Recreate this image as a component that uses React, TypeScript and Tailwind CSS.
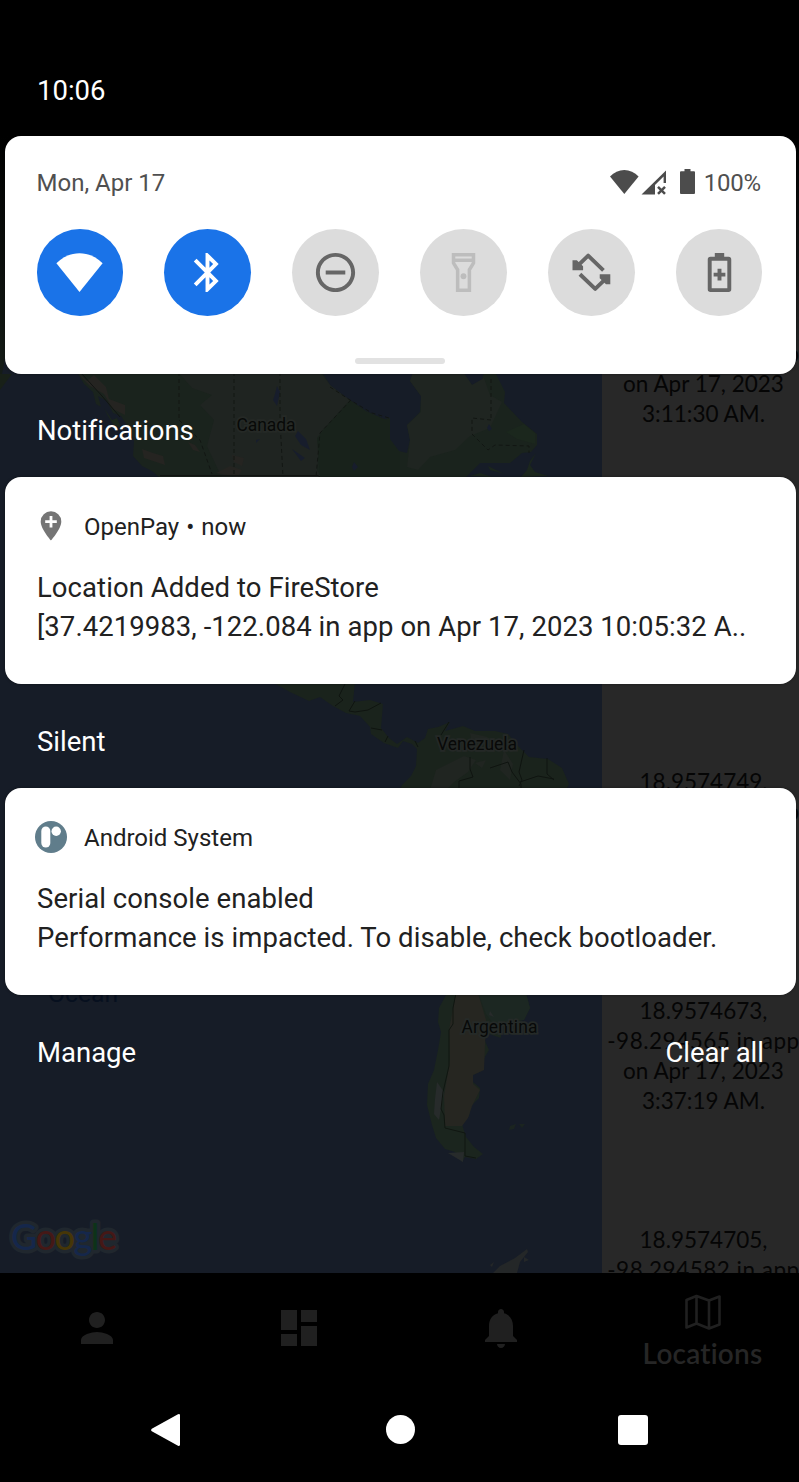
import type { ReactNode } from "react";

const wifiFan = "M12 21.9 0.2 7.3C3.5 4 7.6 2.2 12 2.2S20.5 4 23.8 7.3Z";

function TileIcon({ children }: { children: ReactNode }) {
  return (
    <svg viewBox="0 0 24 24" className="size-[47px]" fill="currentColor">
      {children}
    </svg>
  );
}

const tiles: { name: string; tone: string; icon: ReactNode }[] = [
  { name: "wifi", tone: "bg-[#1a73e8] text-white", icon: <path d={wifiFan} /> },
  {
    name: "bluetooth",
    tone: "bg-[#1a73e8] text-white",
    icon: (
      <path d="M17.71 7.71L12 2h-1v7.59L6.41 5 5 6.41 10.59 12 5 17.59 6.41 19 11 14.41V22h1l5.71-5.71-4.3-4.29 4.3-4.29zM13 5.83l1.88 1.88L13 9.59V5.83zm1.88 10.46L13 18.17v-3.76l1.88 1.88z" />
    ),
  },
  {
    name: "dnd",
    tone: "bg-[#dcdcdc] text-[#666]",
    icon: (
      <path d="M7 11h10v2H7zM12 2C6.48 2 2 6.48 2 12s4.48 10 10 10 10-4.48 10-10S17.52 2 12 2zm0 18c-4.41 0-8-3.59-8-8s3.59-8 8-8 8 3.59 8 8-3.59 8-8 8z" />
    ),
  },
  {
    name: "flashlight",
    tone: "bg-[#dcdcdc] text-[#bdbdbd]",
    icon: (
      <>
        <path
          d="M6.9 2.9h10.2v4.3L15 10.6v10.5H9V10.6L6.9 7.2zM6.9 5.8h10.2"
          fill="none"
          stroke="currentColor"
          strokeWidth="1.8"
        />
        <circle cx="12" cy="13.9" r="1.5" />
      </>
    ),
  },
  {
    name: "rotate",
    tone: "bg-[#dcdcdc] text-[#666]",
    icon: (
      <>
        <path
          d="M4.5 9 10.3 3.4 18.1 10.9M6.100 12.900 13.900 20.400 19.600 14.900"
          fill="none"
          stroke="currentColor"
          strokeWidth="2"
          strokeLinejoin="round"
        />
        <path d="M2.300 5.700h2.200l3.200 3.100v2H2.300zM21.600 18h-2.200l-3.200-3.100v-2h5.400z" />
      </>
    ),
  },
  {
    name: "battery",
    tone: "bg-[#dcdcdc] text-[#666]",
    icon: (
      <>
        <rect x="7" y="5" width="10" height="16" rx=".4" fill="none" stroke="currentColor" strokeWidth="2" />
        <path d="M9.6 2h4.8v2.5H9.6zM11 10.1h2v2h2v2h-2v2h-2v-2H9v-2h2z" />
      </>
    ),
  },
];

function MapBackdrop() {
  return (
    <svg viewBox="0 0 602 1273" className="h-[1273px] w-[602px] shrink-0 bg-[#161c27]">
      <path d="M0 136H6V352L2 374H0Z" fill="#151c17" />
      <path d="M0 374V390L12 374Z" fill="#182018" />
      {/* North America */}
      <g>
        <path
          d="M77 372 84 384 93 392 96 404 101 407 98 396 107 401 113 413 121 416 128 427 134 441 133 456 142 466 152 471 160 478H465L480 463H510L522 453 531 452 537 445V434L522 422 504 403 505 392 495 372H484L482 380 472 385 463 372H413L410 381 421 396 420 412 407 425 410 440 407 453 399 451 390 439V418L384 419 365 411 345 397 330 385 322 372Z"
          fill="#1a231d"
        />
        <path d="M178 372H320L331 386 350 400 320 433 317 470 322 478H222L207 446 214 420 200 405 212 395 192 388Z" fill="#1f2421" />
        <path d="M413 372H463L472 385 484 378 490 395 502 402 490 428 470 436 455 450 430 457 418 470 407 467 410 440 407 425 421 412V396L410 381Z" fill="#1f2521" />
        <path d="M350 400 366 411 384 419 390 420V440L400 453V478H320L317 438Z" fill="#18221b" />
        <path d="m78 372 9 9 7-6 12 12 3 12 16 6v10l-12-6-9-15-14-8-8-8zM142 449l11 4 10 3 2 9-9-3-12-4zM188 442l7 3 5 7-7-2zM232 455l12 3-2 8-8-4zM216 473l14-7 12 4-4 7z" fill="#252421" />
        <path d="m298 431 8 8 4 11-9-5-6-9zM277 386l3 6-3 14-4-6 2-6zM292 449l13 9-4 3zM354 462l4 5-4 4-2-4zM256 440l4-1-4 4zM489 424l3 5-3 2-2-3z" fill="#171d2c" />
        <path d="m536 453-6 12 5 7 13 4-27 1 6-7 3-9zM488 466l12 6 5 2-15-4zM470 476l10-3 12 4zM104 408l8 12 5-2 4 10-8-4-5-8z" fill="#1b261d" />
        <path d="M506 432l18-8 11 9v11l-18-5z" fill="#1b271d" />
        <path
          d="M179 372V420M179 420 200 440 212 474M234 372V477M280 372V420L283 477M351 400 320 433 316 477M330 387 350 400 372 413 389 418M491 379V420M491 420 472 418 472 434 488 450 495 445 529 446V453"
          fill="none"
          stroke="#121613"
          strokeDasharray="4 3"
        />
        <path d="M160 475.500H318L321 478M82 374l20 22 18 21" fill="none" stroke="#121513" strokeWidth="1" />
        <text x="266" y="430.500" textAnchor="middle" textLength="59" className="font-['Roboto'] text-[17.5px]" fill="#080908" stroke="#252926" strokeWidth="3.500" paintOrder="stroke">Canada</text>
      </g>
      {/* Central America and northern South America */}
      <path d="M272 682 290 692 309 701 320 697 333 706 346 713 360 716 370 727 371 734 384 743 398 748 403 741 412 744 417 749 416 766 411 776 402 785 400 790H566L569 784 562 768 548 759 529 757 518 746 508 734 495 731 475 731 463 726 445 731 450 722 438 727 428 729 425 738 418 743 407 737 397 744 389 738 381 728 383 704 370 700 353 702 355 682Z" fill="#1a231c" />
      <path d="m436 770 28-14 12 4-8 12-14 10-8 8h-16zM504 750l9 14-3 16-10-10zM470 733l18 4-4 5-13-3zM475 763l11-3-4 8z" fill="#202521" />
      <path
        d="m345 684-6 12 4 4-8 6M355 701l-6 10 6 1 13-2 13-7M371 728l11 2M385 742l3-6M449 722l-8 13M415 741l3 6M470 757v12l3 8-14 4v8M490 768l18-6 4 10 9 12v6M524 750l-5 22 3 8-3 6M547 758v16l7 6M520 782l18-6 16 3"
        fill="none"
        stroke="#0f1410"
      />
      <text x="477" y="750" textAnchor="middle" textLength="80" className="font-['Roboto'] text-[17.500px]" fill="#080908" stroke="#242826" strokeWidth="3.500" paintOrder="stroke">Venezuela</text>
      {/* Southern South America */}
      <path d="M447 993 439 1008 438 1022 441 1032 438 1050 434 1070 428 1084 427 1105 432 1125 436 1138 445 1149 455 1152 462 1162 465 1157 476 1159 483 1154 474 1147 466 1137 462 1124 469 1116 471 1106 479 1098 480 1088 473 1082 473 1075 483 1070V1060L489 1050 485 1041 486 1033 501 1038 501 1026 524 1020 530 1008 526 993Z" fill="#1b251e" />
      <path d="M456 993H478L486 1020 484 1070 473 1075 473 1084 480 1090 472 1106 468 1118 462 1126 445 1126 444 1096 450 1060 449 1030Z" fill="#262621" />
      <path d="m478 993 8 21 6 8 32-2 6-12-4-15z" fill="#1c2722" />
      <path d="m437 1082 7 10-5 28-5-6 1-15zM448 1153l16-1-1 10zM490 1011l4 6-5-2z" fill="#272b2b" />
      <path d="M456 993 453 1008 453 1024 449 1030V1066L443 1092 441 1109 444 1115 445 1128 465 1133V1156L476 1158" fill="none" stroke="#101611" />
      <path d="m510 1126 6-2-2 5-5 1zM519 1124l6 0-3 4z" fill="#1b2420" />
      <path d="M493 1273 500 1266 515 1258 527 1249 528 1252 520 1262 517 1273ZM524 1257l5 3-5 2zM490 1265l4-3-2 5z" fill="#242728" />
      <text x="499.500" y="1033" textAnchor="middle" textLength="76" className="font-['Roboto'] text-[17.500px]" fill="#080908" stroke="#252a28" strokeWidth="3.500" paintOrder="stroke">Argentina</text>
      <text x="83" y="1002" textAnchor="middle" textLength="70" lengthAdjust="spacingAndGlyphs" className="font-['Roboto'] text-[24px]" fill="#07101f">Ocean</text>
      <text x="11" y="1250" textLength="106" className="font-['Lato'] text-[36px] font-medium" stroke="#20272e" strokeWidth="7" strokeLinejoin="round">Google</text>
      <text x="11" y="1250" textLength="106" className="font-['Lato'] text-[36px] font-medium" aria-hidden="true">
        <tspan fill="#15274b">G</tspan>
        <tspan fill="#451816">o</tspan>
        <tspan fill="#463607">o</tspan>
        <tspan fill="#15274b">g</tspan>
        <tspan fill="#0d3319">l</tspan>
        <tspan fill="#451816">e</tspan>
      </text>
    </svg>
  );
}

function LogEntry({ lines }: { lines: string[] }) {
  return (
    <div className="flex h-[229px] shrink-0 flex-col items-center">
      {lines.map((line) => (
        <span
          key={line}
          className={"h-[30px] whitespace-nowrap leading-[30px] " + (line.startsWith("-") ? "tracking-[0.5px]" : "")}
        >
          {line}
        </span>
      ))}
    </div>
  );
}

function DimmedApp() {
  return (
    <div className="absolute inset-0 flex flex-col overflow-hidden bg-black">
      <div className="flex h-[1273px] shrink-0 overflow-hidden">
        <MapBackdrop />
        <div className="flex w-[203px] shrink-0 flex-col items-center overflow-hidden bg-[#282828] pt-[309px] font-['Lato',sans-serif] text-[22.500px] text-[#050505]">
          <LogEntry lines={["18.9574705,", "-98.294582 in app", "on Apr 17, 2023", "3:11:30 AM."]} />
          <LogEntry lines={[]} />
          <LogEntry lines={["18.9574749,", "-98.294565 in app", "on Apr 17, 2023", "3:36:02 AM."]} />
          <LogEntry lines={["18.9574673,", "-98.294565 in app", "on Apr 17, 2023", "3:37:19 AM."]} />
          <LogEntry lines={["18.9574705,", "-98.294582 in app"]} />
        </div>
      </div>
      <div className="flex h-[104px] shrink-0 justify-center text-[#202020]">
        <div className="flex w-[202px] shrink-0 justify-center pt-[31px]">
          <svg viewBox="0 0 24 24" className="size-[48px]" fill="currentColor">
            <path d="M12 12c2.210 0 4-1.790 4-4s-1.790-4-4-4-4 1.790-4 4 1.790 4 4 4zm0 2c-2.670 0-8 1.340-8 4v2h16v-2c0-2.660-5.330-4-8-4z" />
          </svg>
        </div>
        <div className="flex w-[202px] shrink-0 justify-center pt-[31px]">
          <svg viewBox="0 0 24 24" className="size-[48px]" fill="currentColor">
            <path d="M3 13h8V3H3v10zm0 8h8v-6H3v6zm10 0h8V11h-8v10zm0-18v6h8V3h-8z" />
          </svg>
        </div>
        <div className="flex w-[202px] shrink-0 justify-center pt-[31px]">
          <svg viewBox="0 0 24 24" className="size-[48px]" fill="currentColor">
            <path d="M12 22c1.100 0 2-.9 2-2h-4c0 1.100.890 2 2 2zm6-6v-5c0-3.070-1.640-5.640-4.500-6.320V4c0-.830-.670-1.500-1.500-1.500s-1.500.670-1.500 1.500v.680C7.630 5.360 6 7.920 6 11v5l-2 2v1h16v-1l-2-2z" />
          </svg>
        </div>
        <div className="flex w-[202px] shrink-0 flex-col items-center pt-[15px]">
          <svg
            viewBox="0 0 48 48"
            className="size-[48px] shrink-0"
            fill="none"
            stroke="currentColor"
            strokeWidth="2.600"
            strokeLinejoin="round"
          >
            <path d="M7.500 12 17.500 8 30 12.500 40.500 8.500V36.500L30 40.500 17.500 35.500 7.500 39.500ZM17.500 8V35.500M30 12.500V40.500" />
          </svg>
          <span className="h-[36px] font-['Lato',sans-serif] text-[28px] font-semibold leading-[34px] tracking-[0.200px] text-[#262626] [font-variant-ligatures:none]">
            Locations
          </span>
        </div>
      </div>
      <div className="absolute inset-x-0 top-[136px] h-[238px] bg-linear-to-b from-black to-transparent" />
    </div>
  );
}

function Notification({ icon, source, title, body }: { icon: ReactNode; source: ReactNode; title: string; body: string }) {
  return (
    <section className="mx-[5px] h-[207px] w-[791px] rounded-2xl bg-white pl-[30px] pt-8 text-[#212121] shadow-[0_0_3px_rgba(0,0,0,0.4)]">
      <div className="flex h-9 items-center gap-[17px]">
        {icon}
        <span className="text-[24px] leading-9">{source}</span>
      </div>
      <div className="mt-[23px] whitespace-nowrap pl-0.5 text-[27.500px] leading-[39px] tracking-[0.06px]">
        <p>{title}</p>
        <p>{body}</p>
      </div>
    </section>
  );
}

export default function App() {
  return (
    <div className="relative h-[1482px] w-[799px] overflow-hidden bg-black font-['Roboto',sans-serif]">
      <DimmedApp />
      <div className="relative flex h-full flex-col">
        <header className="flex h-[136px] shrink-0 items-start bg-black pl-[37px] pt-[73px] text-[27.500px] leading-9 text-white">
          10:06
        </header>

        <section className="mx-[5px] flex h-[238px] w-[791px] shrink-0 flex-col rounded-2xl bg-white pl-[31.500px] pr-8 pt-7 shadow-[0_0_3px_rgba(0,0,0,0.4)]">
          <div className="flex h-9 items-center justify-between text-[24px] leading-9 text-[#505050]">
            <span className="pt-px">Mon, Apr 17</span>
            <div className="flex items-center pr-[3px]">
              <svg viewBox="0 0 86 26" className="h-[26px] w-[86px]" fill="#4c4c4c">
                <path d="M14.300 25 0 7.500C4 3.400 9 1.100 14.300 1.100S24.600 3.400 28.600 7.500Z" />
                <path d="M31.500 25.500 56 1.500V14H53.600V7.500L45 16V25.500Z" />
                <path d="m48 17.800 7 7M55 17.800l-7 7" stroke="#4c4c4c" strokeWidth="2.500" />
                <path d="M74.500 0h6v2.200H84a1 1 0 0 1 1 1V24a1 1 0 0 1-1 1H71a1 1 0 0 1-1-1V3.200a1 1 0 0 1 1-1h3.500z" />
              </svg>
              <span className="ml-2 pt-px tracking-[-0.2px]">100%</span>
            </div>
          </div>
          <div className="mt-[29px] flex justify-between pr-[1.500px]">
            {tiles.map((tile) => (
              <div key={tile.name} className={"flex size-[86.500px] items-center justify-center rounded-full " + tile.tone}>
                <TileIcon>{tile.icon}</TileIcon>
              </div>
            ))}
          </div>
          <div className="mr-px mt-[42.500px] h-1.5 w-[90px] self-center rounded-full bg-[#e2e2e2]" />
        </section>

        <h2 className="h-[103px] shrink-0 pl-[37px] pt-[39px] text-[27.500px] leading-9 tracking-[-0.05px] text-white">Notifications</h2>
        <Notification
          icon={
            <svg viewBox="0 0 32 36" className="h-9 w-8 shrink-0">
              <path d="M16 2.300A10.300 10.300 0 0 0 5.700 12.500C5.700 20 16 31.500 16 31.500S26.300 20 26.300 12.500A10.300 10.300 0 0 0 16 2.300Z" fill="#757575" />
              <path d="M16 7v11.500M10.200 12.700h11.600" stroke="#fff" strokeWidth="2.800" />
            </svg>
          }
          source={
            <>
              OpenPay<span className="mx-[7px]">•</span>now
            </>
          }
          title="Location Added to FireStore"
          body="[37.4219983, -122.084 in app on Apr 17, 2023 10:05:32 A.."
        />

        <h2 className="h-[104px] shrink-0 pl-[37px] pt-10 text-[27.500px] leading-9 text-white">Silent</h2>
        <Notification
          icon={
            <svg viewBox="0 0 32 36" className="h-9 w-8 shrink-0">
              <circle cx="16" cy="17" r="16" fill="#607d8b" />
              <rect x="6.300" y="6.500" width="9" height="21" rx="4.500" fill="#fff" />
              <circle cx="21.200" cy="11.200" r="4.700" fill="#fff" />
            </svg>
          }
          source="Android System"
          title="Serial console enabled"
          body="Performance is impacted. To disable, check bootloader."
        />

        <div className="flex h-[278px] shrink-0 items-start justify-between pl-[37px] pr-[35px] pt-10 text-[27.500px] leading-9 text-white">
          <span>Manage</span>
          <span>Clear all</span>
        </div>

        <nav className="mt-[104px] flex h-[105px] shrink-0 items-center justify-between pl-[151px] pr-[151px]">
          <svg viewBox="0 0 30 34" className="h-[34px] w-[30px]" fill="#fff">
            <path d="M.8 15.700 27 1.200q2-.9 2 1.200V31.600q0 2.100-2 1.200L.8 18.300q-1.400-1.300 0-2.600Z" />
          </svg>
          <span className="ml-px size-[29px] rounded-full bg-white" />
          <span className="size-[30px] rounded-[3px] bg-white" />
        </nav>
      </div>
    </div>
  );
}
